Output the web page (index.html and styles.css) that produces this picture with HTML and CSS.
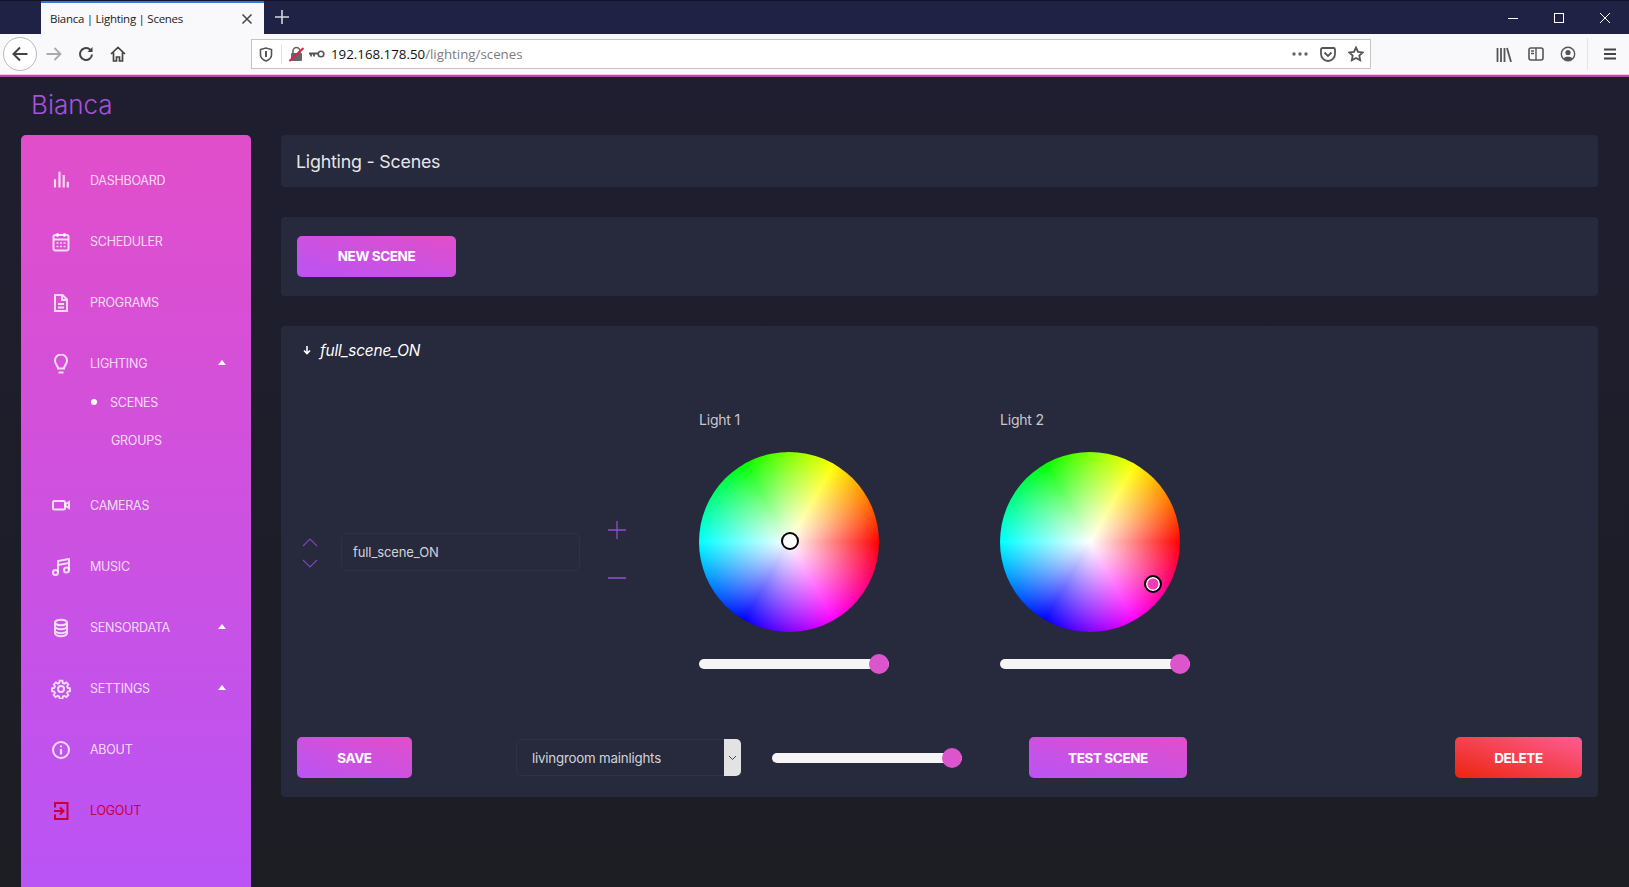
FILE: index.html
```html
<!DOCTYPE html>
<html lang="en">
<head>
  <meta charset="UTF-8">
  <title>Bianca | Lighting | Scenes</title>
  <link rel="stylesheet" href="styles.css">
</head>
<body>

  <!-- browser chrome -->
  <header class="browser">
    <div class="tabbar">
      <div class="tab">
        <span class="tab-title">Bianca | Lighting | Scenes</span>
        <svg class="tab-close" width="12" height="12" viewBox="0 0 12 12"><path d="M1.5 1.5l9 9M10.5 1.5l-9 9" stroke="#444" stroke-width="1.5" fill="none"/></svg>
      </div>
      <svg class="new-tab" width="16" height="16" viewBox="0 0 16 16"><path d="M8 1v14M1 8h14" stroke="#d6d7e0" stroke-width="1.6" fill="none"/></svg>
      <div class="win-controls">
        <span class="win-btn"><svg width="12" height="12" viewBox="0 0 12 12"><path d="M1 6.5h10" stroke="#fff" fill="none"/></svg></span>
        <span class="win-btn"><svg width="12" height="12" viewBox="0 0 12 12"><rect x="1.5" y="1.5" width="9" height="9" stroke="#fff" fill="none"/></svg></span>
        <span class="win-btn"><svg width="12" height="12" viewBox="0 0 12 12"><path d="M1 1l10 10M11 1L1 11" stroke="#fff" fill="none"/></svg></span>
      </div>
    </div>
    <div class="toolbar">
      <span class="back-btn"><svg width="18" height="18" viewBox="0 0 18 18"><path d="M16.5 9H2.5M9 2.5L2.5 9 9 15.5" stroke="#444" stroke-width="2" fill="none"/></svg></span>
      <svg class="nav-forward" width="16" height="16" viewBox="0 0 16 16"><path d="M0.5 8h14M8.5 2l6 6-6 6" stroke="#aaa" stroke-width="1.8" fill="none"/></svg>
      <svg class="nav-icon" width="16" height="16" viewBox="0 0 16 16"><path d="M14 8.500A6 6 0 1 1 11.600 3.200L14 5" stroke="#444" stroke-width="2" fill="none"/><path d="M14.500 1v5h-5z" fill="#444"/></svg>
      <svg class="nav-icon" width="16" height="16" viewBox="0 0 16 16"><path d="M1 8l7-6.500L15 8M3.500 6.500V15h3v-4h3v4h3V6.500" stroke="#444" stroke-width="1.7" fill="none"/></svg>

      <div class="urlbar">
        <svg class="url-shield" width="14" height="15" viewBox="0 0 14 15"><path d="M1.500 2.500L7 1l5.500 1.500V8c0 3-3 5-5.500 6C4.500 13 1.500 11 1.500 8z" stroke="#555" stroke-width="1.600" fill="none"/><path d="M7 4v6" stroke="#555" stroke-width="2"/></svg>
        <span class="url-divider"></span>
        <svg class="url-lock" width="15" height="16" viewBox="0 0 15 16"><path d="M4 7V5a3.500 3.500 0 0 1 7 0v2" stroke="#666" stroke-width="1.600" fill="none"/><rect x="2" y="7" width="11" height="8" rx="1" fill="#666"/><path d="M0.500 15L14.500 2" stroke="#e0244f" stroke-width="2"/></svg>
        <svg class="url-key" width="16" height="10" viewBox="0 0 16 10"><circle cx="12" cy="5" r="2.800" stroke="#555" stroke-width="1.600" fill="none"/><path d="M0 4.500h9M2 4.500v3M5 4.500v3" stroke="#555" stroke-width="1.800" fill="none"/></svg>
        <span class="url-text"><span class="url-host">192.168.178.50</span>/lighting/scenes</span>
        <svg class="url-dots" width="16" height="4" viewBox="0 0 16 4"><circle cx="2" cy="2" r="1.700" fill="#666"/><circle cx="8" cy="2" r="1.700" fill="#666"/><circle cx="14" cy="2" r="1.700" fill="#666"/></svg>
        <svg class="url-pocket" width="16" height="15" viewBox="0 0 16 15"><path d="M1 2.500A1.500 1.500 0 0 1 2.500 1h11A1.500 1.500 0 0 1 15 2.500V7a7 7 0 0 1-14 0z" stroke="#555" stroke-width="1.800" fill="none"/><path d="M4.500 5.500L8 9l3.500-3.500" stroke="#555" stroke-width="1.800" fill="none"/></svg>
        <svg class="url-star" width="16" height="16" viewBox="0 0 16 16"><path d="M8 1.500l2 4.300 4.700.6-3.400 3.200.9 4.700L8 12l-4.200 2.300.9-4.700L1.300 6.400 6 5.800z" stroke="#555" stroke-width="1.800" fill="none"/></svg>
      </div>

      <svg class="tool-library" width="16" height="15" viewBox="0 0 16 15"><path d="M1.500 1v14M5 1v14M8.500 1v14M11 1l4 14" stroke="#555" stroke-width="1.800" fill="none"/></svg>
      <svg class="tool-icon" width="16" height="14" viewBox="0 0 16 14"><rect x="1" y="1" width="14" height="12" rx="2" stroke="#555" stroke-width="1.600" fill="none"/><path d="M8 1v12M3 4h3M3 6.500h3" stroke="#555" stroke-width="1.400" fill="none"/></svg>
      <svg class="tool-icon" width="16" height="16" viewBox="0 0 16 16"><circle cx="8" cy="8" r="6.700" stroke="#555" stroke-width="1.400" fill="none"/><circle cx="8" cy="6.500" r="2.600" fill="#555"/><path d="M3.500 12.500c1-2.500 8-2.500 9 0A6 6 0 0 1 3.500 12.500z" fill="#555"/></svg>
      <span class="tool-divider"></span>
      <svg class="tool-menu" width="14" height="12" viewBox="0 0 14 12"><path d="M1 1.500h12M1 6h12M1 10.500h12" stroke="#444" stroke-width="1.800" fill="none"/></svg>
    </div>
    <div class="accent-line"></div>
  </header>

  <div class="page">
    <div class="brand">Bianca</div>

    <div class="layout">
      <nav class="sidebar">
        <ul class="nav">
          <li class="nav-row">
            <svg class="nav-svg" viewBox="0 0 20 20"><path d="M4 16.500V8.300M8.500 16.500V.7M12.700 16.500V4M16.800 16.500V10.700" stroke-width="2.200"/></svg>
            <span>DASHBOARD</span>
          </li>
          <li class="nav-row">
            <svg class="nav-svg" viewBox="0 0 20 20"><rect x="2.500" y="3" width="15" height="15.500" rx="2"/><path d="M2.500 7.500h15M6.500 1v4M13.500 1v4" /><path d="M5.500 11h2M9 11h2M12.500 11h2M5.500 14.500h2M9 14.500h2M12.500 14.500h2" stroke-width="1.600"/></svg>
            <span>SCHEDULER</span>
          </li>
          <li class="nav-row">
            <svg class="nav-svg" viewBox="0 0 20 20"><path d="M4 2h7.500L16 6.500V18H4zM11 2v5h5M7 11h6M7 14.500h6"/></svg>
            <span>PROGRAMS</span>
          </li>
          <li class="nav-row">
            <svg class="nav-svg" viewBox="0 0 20 20"><path d="M7 14.500c0-3-3-4-3-8a6 6 0 0 1 12 0c0 4-3 5-3 8zM7.500 18.500h5"/></svg>
            <span>LIGHTING</span>
            <i class="caret"></i>
          </li>
          <li class="subnav">
            <div class="sub-row"><i class="bullet"></i><span>SCENES</span></div>
            <div class="sub-row"><span>GROUPS</span></div>
          </li>
          <li class="nav-row">
            <svg class="nav-svg" viewBox="0 0 20 20"><rect x="2" y="5" width="12" height="8.500" rx="1.500"/><path d="M14 8.500l4-2.500v6l-4-2.500z"/></svg>
            <span>CAMERAS</span>
          </li>
          <li class="nav-row">
            <svg class="nav-svg" viewBox="0 0 20 20"><circle cx="4.500" cy="15.500" r="2.500"/><circle cx="15.500" cy="13" r="2.500"/><path d="M7 15.500V4L18 2v11M7 8l11-2"/></svg>
            <span>MUSIC</span>
          </li>
          <li class="nav-row">
            <svg class="nav-svg" viewBox="0 0 20 20"><ellipse cx="10" cy="4.500" rx="6" ry="2.800"/><path d="M4 4.500v11c0 1.500 2.700 2.800 6 2.800s6-1.300 6-2.800v-11M4 8.500c0 1.500 2.700 2.800 6 2.800s6-1.300 6-2.800M4 12.500c0 1.500 2.700 2.800 6 2.800s6-1.300 6-2.800"/></svg>
            <span>SENSORDATA</span>
            <i class="caret"></i>
          </li>
          <li class="nav-row">
            <svg class="nav-svg" viewBox="0 0 20 20"><circle cx="10" cy="10" r="3"/><path d="M8.500 1.800h3l.5 2.400 1.500.7 2.100-1.300 2.100 2.100-1.300 2.100.7 1.500 2.300.5v3l-2.300.5-.7 1.500 1.300 2.100-2.100 2.100-2.100-1.300-1.500.7-.5 2.300h-3l-.5-2.300-1.500-.7-2.100 1.300-2.100-2.100 1.300-2.100-.7-1.500-2.300-.5v-3l2.300-.5.7-1.500L2.500 5.700l2.100-2.100 2.100 1.300 1.500-.7z" transform="translate(.5 0) scale(.95)"/></svg>
            <span>SETTINGS</span>
            <i class="caret"></i>
          </li>
          <li class="nav-row">
            <svg class="nav-svg" viewBox="0 0 20 20"><circle cx="10" cy="10" r="8"/><path d="M10 9v5.500M10 5.500v1.800" stroke-width="2.200"/></svg>
            <span>ABOUT</span>
          </li>
          <li class="nav-row logout">
            <svg class="nav-svg" viewBox="0 0 20 20"><path d="M4 6.500V2h12.500v16H4v-4.500M3 10h9.500M9 6.500l3.500 3.500L9 13.500"/></svg>
            <span>LOGOUT</span>
          </li>
        </ul>
      </nav>

      <main class="content">
        <section class="card card-title">
          <h2>Lighting - Scenes</h2>
        </section>

        <section class="card card-new">
          <button class="btn btn-wide">NEW SCENE</button>
        </section>

        <section class="card card-scene">
          <div class="scene-head">
            <svg width="10" height="10" viewBox="0 0 10 10"><path d="M5 1v7M2 5.500L5 8.500l3-3" stroke="#fff" stroke-width="1.600" fill="none"/></svg>
            <em>full_scene_ON</em>
          </div>

          <div class="scene-body">
            <div class="scene-name">
              <div class="order-arrows">
                <svg width="16" height="9" viewBox="0 0 16 9"><path d="M1 8l7-7 7 7" stroke="#7d48bd" stroke-width="1.100" fill="none"/></svg>
                <svg width="16" height="9" viewBox="0 0 16 9"><path d="M1 1l7 7 7-7" stroke="#7d48bd" stroke-width="1.100" fill="none"/></svg>
              </div>
              <input class="name-input" type="text" value="full_scene_ON">
              <div class="plus-minus">
                <svg width="18" height="18" viewBox="0 0 18 18"><path d="M0 9h18M9 0v18" stroke="#8a4fd0" stroke-width="1.300" fill="none"/></svg>
                <svg width="18" height="18" viewBox="0 0 18 18"><path d="M0 9h18" stroke="#8a4fd0" stroke-width="1.600" fill="none"/></svg>
              </div>
            </div>

            <div class="light">
              <div class="light-label">Light 1</div>
              <div class="wheel">
                <span class="wheel-marker marker-one"></span>
              </div>
              <input class="slider" type="range" min="0" max="100" value="100">
            </div>

            <div class="light">
              <div class="light-label">Light 2</div>
              <div class="wheel">
                <span class="wheel-marker marker-two"></span>
              </div>
              <input class="slider" type="range" min="0" max="100" value="100">
            </div>
          </div>

          <div class="scene-foot">
            <button class="btn btn-save">SAVE</button>
            <div class="select-box">
              <select class="group-select">
                <option>livingroom mainlights</option>
              </select>
              <span class="select-arrow"><svg width="9" height="6" viewBox="0 0 9 6"><path d="M1 1l3.500 3.500L8 1" stroke="#444" fill="none"/></svg></span>
            </div>
            <input class="slider slider-foot" type="range" min="0" max="100" value="100">
            <button class="btn btn-test">TEST SCENE</button>
            <button class="btn btn-danger">DELETE</button>
          </div>
        </section>
      </main>
    </div>
  </div>

</body>
</html>
```

FILE: styles.css
```css
html, body {
  height: 100%;
}

body {
  margin: 0;
  height: 100vh;
  overflow: hidden;
  display: flex;
  flex-direction: column;
  font-family: Inter, "Liberation Sans", sans-serif;
  background: #1e1e2a;
}

/* browser chrome */
.browser {
  flex: none;
}

.tabbar {
  height: 34px;
  display: flex;
  align-items: flex-end;
  padding-left: 41px;
  padding-right: 1px;
  background: #1f2244;
  border-top: 1px solid #12132a;
  box-sizing: border-box;
}

.tab {
  width: 223px;
  height: 33px;
  box-sizing: border-box;
  display: flex;
  align-items: center;
  padding: 0 11px 0 9px;
  background: #f9f9fb;
  border-top: 2px solid #2f7bd3;
}

.tab-title {
  flex: 1;
  font-family: "Open Sans", sans-serif;
  font-size: 11.500px;
  letter-spacing: -0.27px;
  color: #222;
  white-space: nowrap;
}

.new-tab {
  margin: 0 0 9px 10px;
}

.win-controls {
  margin-left: auto;
  height: 33px;
  display: flex;
}

.win-btn {
  width: 46px;
  display: flex;
  align-items: center;
  justify-content: center;
}

.toolbar {
  height: 40px;
  display: flex;
  align-items: center;
  padding-left: 3px;
  background: #f9f9fb;
}

.back-btn {
  width: 34px;
  height: 34px;
  box-sizing: border-box;
  display: flex;
  align-items: center;
  justify-content: center;
  border: 1px solid #b9b9bd;
  border-radius: 50%;
  background: #fff;
}

.nav-forward {
  margin-left: 9px;
}

.nav-icon {
  margin-left: 16px;
}

.urlbar {
  width: 1120px;
  height: 30px;
  box-sizing: border-box;
  margin-left: 125px;
  display: flex;
  align-items: center;
  padding-left: 7px;
  background: #fff;
  border: 1px solid #c2c4c6;
}

.url-divider {
  width: 1px;
  height: 20px;
  margin: 0 7px 0 8px;
  background: #e2e2e4;
}

.url-key {
  margin-left: 5px;
}

.url-text {
  margin-left: 6px;
  font-family: "Open Sans", sans-serif;
  font-size: 13.300px;
  color: #7c7c80;
}

.url-host {
  color: #111;
}

.url-dots {
  margin-left: auto;
}

.url-pocket {
  margin-left: 12px;
}

.url-star {
  margin-left: 12px;
  margin-right: 6px;
}

.tool-library {
  margin-left: 125px;
}

.tool-icon {
  margin-left: 16px;
}

.tool-divider {
  width: 1px;
  height: 32px;
  margin-left: 11px;
  background: #e4e4e6;
}

.tool-menu {
  margin-left: 15px;
}

.accent-line {
  height: 3px;
  background: #b04fa8;
  border-top: 1px solid #f3c8ec;
  box-sizing: border-box;
}

/* page */
.page {
  flex: 1;
  min-height: 0;
  display: flex;
  flex-direction: column;
  background: linear-gradient(#1e1e30, #1d1d24);
}

.brand {
  height: 58px;
  box-sizing: border-box;
  padding: 11px 0 0 31px;
  font-weight: 300;
  font-size: 26px;
  line-height: 34px;
  color: #a652dd;
}

.layout {
  flex: 1;
  min-height: 0;
  display: flex;
  gap: 30px;
  padding: 0 31px 0 21px;
}

/* sidebar */
.sidebar {
  width: 230px;
  flex: none;
  border-radius: 5px 5px 0 0;
  background: linear-gradient(#e14eca, #ba54f5);
}

.nav {
  list-style: none;
  margin: 0;
  padding: 25px 0 0;
}

.nav-row {
  height: 41px;
  margin-bottom: 20px;
  padding: 0 25px 0 30px;
  display: flex;
  align-items: center;
  font-size: 12.500px;
  letter-spacing: -0.25px;
  color: rgba(255, 255, 255, 0.8);
}

.nav-svg {
  width: 20px;
  height: 20px;
  margin-right: 19px;
  flex: none;
  fill: none;
  stroke: rgba(255, 255, 255, 0.8);
  stroke-width: 2;
}

.caret {
  margin-left: auto;
  margin-top: -3px;
  width: 0;
  height: 0;
  border-left: 4.500px solid transparent;
  border-right: 4.500px solid transparent;
  border-bottom: 5px solid #fff;
}

.subnav {
  margin-top: -21px;
  margin-bottom: 26px;
}

.sub-row {
  height: 38px;
  padding-left: 90px;
  display: flex;
  align-items: center;
  font-size: 12.500px;
  letter-spacing: -0.25px;
  color: rgba(255, 255, 255, 0.8);
}

.bullet {
  width: 6px;
  height: 6px;
  margin-left: -20px;
  margin-right: 13px;
  border-radius: 50%;
  background: #fff;
}

.logout {
  color: #c8003c;
}

.logout .nav-svg {
  stroke: #c8003c;
}

/* content */
.content {
  flex: 1;
  min-width: 0;
  display: flex;
  flex-direction: column;
  gap: 30px;
}

.card {
  border-radius: 4px;
  background: #27293d;
  box-sizing: border-box;
}

.card-title {
  height: 52px;
  display: flex;
  align-items: center;
  padding: 1px 0 0 15px;
}

.card-title h2 {
  margin: 0;
  font-weight: 400;
  font-size: 17.800px;
  letter-spacing: -0.2px;
  color: rgba(255, 255, 255, 0.9);
}

.card-new {
  height: 79px;
  padding: 19px 16px 0;
}

.card-scene {
  height: 471px;
  padding: 0 16px;
}

.btn {
  height: 41px;
  padding: 0 0 1px;
  border: none;
  border-radius: 5px;
  font-family: Inter, sans-serif;
  font-weight: 700;
  font-size: 13.500px;
  letter-spacing: -0.4px;
  color: #fff;
  cursor: pointer;
  background: linear-gradient(to bottom left, #e14eca, #ba54f5);
}

.btn-wide {
  width: 159px;
}

.btn-save {
  width: 115px;
  padding: 0;
}

.btn-test {
  width: 158px;
  margin-left: 67px;
  padding: 0;
}

.btn-danger {
  width: 127px;
  margin-left: auto;
  padding: 0;
  background: linear-gradient(to bottom left, #fd5d93, #ec250d);
}

.scene-head {
  height: 48px;
  display: flex;
  align-items: center;
  gap: 8px;
  padding-left: 5px;
  font-size: 15.400px;
  letter-spacing: -0.2px;
  color: #fff;
}

.scene-body {
  height: 363px;
  padding-top: 36px;
  display: flex;
  box-sizing: border-box;
}

.scene-name {
  width: 402px;
  flex: none;
  height: 78px;
  margin-top: 103px;
  display: flex;
  align-items: center;
}

.order-arrows {
  width: 16px;
  margin: 2px 0 0 5px;
  display: flex;
  flex-direction: column;
  gap: 12px;
}

.order-arrows svg {
  display: block;
}

.name-input {
  width: 239px;
  height: 38px;
  box-sizing: border-box;
  margin-left: 23px;
  padding: 0 11px;
  border: 1px solid #2f3149;
  border-radius: 6px;
  background: transparent;
  font-family: Inter, sans-serif;
  font-size: 13px;
  letter-spacing: -0.1px;
  color: rgba(255, 255, 255, 0.8);
}

.plus-minus {
  margin: 4px 0 0 28px;
  display: flex;
  flex-direction: column;
  gap: 30px;
}

.plus-minus svg {
  display: block;
}

.light {
  width: 301px;
  flex: none;
}

.light-label {
  height: 42px;
  font-size: 14px;
  letter-spacing: -0.2px;
  line-height: 20px;
  color: rgba(255, 255, 255, 0.75);
}

.wheel {
  position: relative;
  width: 180px;
  height: 180px;
  border-radius: 50%;
  background:
    radial-gradient(circle closest-side, #fff 0%, rgba(255, 255, 255, 0) 100%),
    conic-gradient(from 90deg, #f00, #f0f, #00f, #0ff, #0f0, #ff0, #f00);
}

.wheel-marker {
  position: absolute;
  width: 18px;
  height: 18px;
  box-sizing: border-box;
  border: 2px solid #000;
  border-radius: 50%;
}

.marker-one {
  left: 82px;
  top: 80px;
  background: #fff;
}

.marker-two {
  left: 144px;
  top: 123px;
  background: #f13bb3;
  box-shadow: inset 0 0 0 1.500px #fff;
}

.slider {
  display: block;
  -webkit-appearance: none;
  appearance: none;
  width: 190px;
  height: 20px;
  margin: 22px 0 0;
  background: transparent;
}

.slider::-webkit-slider-runnable-track {
  height: 10px;
  border-radius: 5px;
  background: #f5f5f5;
}

.slider::-webkit-slider-thumb {
  -webkit-appearance: none;
  width: 20px;
  height: 20px;
  margin-top: -5px;
  border-radius: 50%;
  background: #dd55cc;
}

.scene-foot {
  display: flex;
  align-items: center;
}

.select-box {
  width: 225px;
  height: 37px;
  margin-left: 104px;
  display: flex;
}

.group-select {
  flex: 1;
  min-width: 0;
  -webkit-appearance: none;
  appearance: none;
  padding: 0 15px;
  border: 1px solid #2f3149;
  border-right: none;
  border-radius: 6px 0 0 6px;
  background: transparent;
  font-family: Inter, sans-serif;
  font-size: 13.300px;
  letter-spacing: -0.2px;
  color: rgba(255, 255, 255, 0.8);
}

.select-arrow {
  width: 17px;
  display: flex;
  align-items: center;
  justify-content: center;
  border-radius: 0 5px 5px 0;
  background: #e3e3e3;
}

.slider-foot {
  margin: 0 0 0 31px;
}
```
